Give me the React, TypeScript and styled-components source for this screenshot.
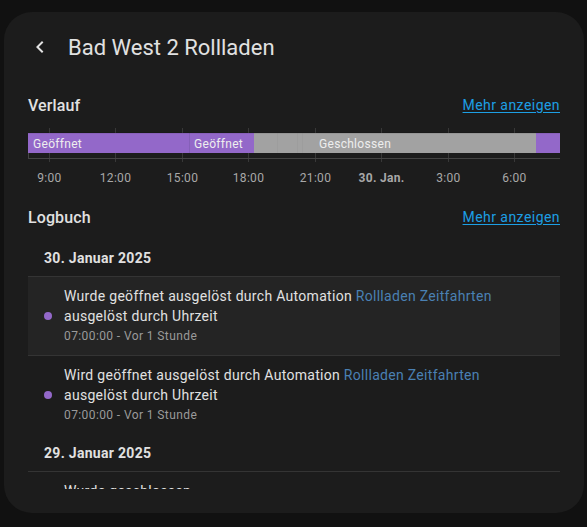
import React from "react";
import styled, { createGlobalStyle } from "styled-components";

const Global = createGlobalStyle`
  html, body { margin: 0; padding: 0; background: #111111; }
  body { font-family: Roboto, "Noto Sans", "Liberation Sans", sans-serif; -webkit-font-smoothing: antialiased; }
`;

const Backdrop = styled.div`
  width: 587px;
  height: 527px;
  box-sizing: border-box;
  padding: 12px 3px 14px 4px;
  background: #111111;
  overflow: hidden;
`;

const Dialog = styled.div`
  width: 580px;
  height: 501px;
  background: #1c1c1c;
  border-radius: 28px;
  display: flex;
  flex-direction: column;
  overflow: hidden;
`;

const Header = styled.div`
  height: 70px;
  display: flex;
  align-items: center;
  padding-left: 12px;
  flex-shrink: 0;
`;

const BackButton = styled.button`
  width: 48px;
  height: 48px;
  border: 0;
  background: transparent;
  display: flex;
  align-items: center;
  justify-content: center;
  padding: 0;
  color: #e1e1e1;
`;

const Title = styled.h2`
  margin: 0 0 0 4px;
  font-size: 22px;
  font-weight: 400;
  color: #e1e1e1;
  letter-spacing: 0;
`;

const Content = styled.div`
  padding: 12px 24px 0;
  display: flex;
  flex-direction: column;
`;

const SectionRow = styled.div<{ $mt?: number }>`
  height: 22px;
  margin-top: ${(p) => p.$mt ?? 0}px;
  display: flex;
  align-items: center;
  justify-content: space-between;
`;

const SectionTitle = styled.h3`
  margin: 0;
  font-size: 16px;
  font-weight: 500;
  color: #e1e1e1;
  letter-spacing: 0.1px;
`;

const MoreLink = styled.a`
  font-size: 14px;
  color: #1d9fe4;
  text-decoration: underline;
  text-underline-offset: 2px;
  letter-spacing: 0.45px;
`;

const ChartWrap = styled.div`
  margin-top: 9px;
  height: 65px;
`;

const LogList = styled.div`
  margin-top: 12px;
  height: 249px;
  overflow: hidden;
`;

const DateHeader = styled.div`
  height: 36px;
  box-sizing: content-box;
  border-bottom: 1px solid #343434;
  padding-left: 16px;
  display: flex;
  align-items: center;
  font-size: 14px;
  font-weight: 700;
  color: #e1e1e1;
  letter-spacing: 0.3px;
`;

const Entry = styled.div<{ $hover?: boolean; $border?: boolean }>`
  display: flex;
  align-items: center;
  padding: 9px 0 9px 16px;
  background: ${(p) => (p.$hover ? "#242424" : "transparent")};
  border-bottom: 1px solid ${(p) => (p.$border ? "#343434" : "transparent")};
`;

const Dot = styled.span`
  width: 8px;
  height: 8px;
  border-radius: 50%;
  background: #9368c9;
  flex-shrink: 0;
  margin-right: 12px;
`;

const EntryBody = styled.div`
  display: flex;
  flex-direction: column;
`;

const Message = styled.div`
  font-size: 14px;
  line-height: 20px;
  color: #e1e1e1;
  letter-spacing: 0.3px;
`;

const EntityLink = styled.span`
  color: #4a80b3;
`;

const Time = styled.div`
  font-size: 12px;
  line-height: 20px;
  color: #9a9a9a;
  letter-spacing: 0.4px;
`;

const ticks = [
  { x: 21, l: "9:00" },
  { x: 87, l: "12:00" },
  { x: 154, l: "15:00" },
  { x: 220, l: "18:00" },
  { x: 287, l: "21:00" },
  { x: 353, l: "30. Jan.", b: true },
  { x: 420, l: "3:00" },
  { x: 486, l: "6:00" },
];

const Chart = () => (
  <svg width="532" height="65" viewBox="0 0 532 65" style={{ display: "block" }}>
    {ticks.map((t) => (
      <line key={t.x} x1={t.x + 0.5} x2={t.x + 0.5} y1={3} y2={37} stroke="#383838" strokeWidth="1" />
    ))}
    <line x1="0.5" x2="0.5" y1="28" y2="34" stroke="#444" />
    <line x1="0" x2="532" y1="33.5" y2="33.5" stroke="#444" />
    <rect x="0" y="8" width="162" height="20" fill="#9368c9" />
    <rect x="162" y="8" width="64" height="20" fill="#9368c9" />
    <line x1="161.5" x2="161.5" y1="8" y2="28" stroke="#8560b8" />
    <rect x="226" y="8" width="282" height="20" fill="#a2a2a2" />
    <line x1="249.5" x2="249.5" y1="8" y2="28" stroke="#9d9d9d" />
    <line x1="269.5" x2="269.5" y1="8" y2="28" stroke="#9d9d9d" />
    <line x1="274.5" x2="274.5" y1="8" y2="28" stroke="#9d9d9d" />
    <rect x="508" y="8" width="24" height="20" fill="#9368c9" />
    <line x1="0" x2="532" y1="8" y2="8" stroke="rgba(0,0,0,0.15)" />
    <g fontFamily="Roboto, sans-serif" fontSize="12" fill="#eeeeee" letterSpacing="0.3">
      <text x="5" y="22.5">Geöffnet</text>
      <text x="166" y="22.5">Geöffnet</text>
      <text x="291" y="22.5">Geschlossen</text>
    </g>
    <g fontFamily="Roboto, sans-serif" fontSize="12" fill="#a8a8a8" textAnchor="middle" letterSpacing="0.3">
      {ticks.map((t) => (
        <text key={t.l} x={t.x + 0.5} y="56.5" fontWeight={t.b ? 700 : 400}>
          {t.l}
        </text>
      ))}
    </g>
  </svg>
);

export default function App() {
  return (
    <>
      <Global />
      <Backdrop>
        <Dialog>
          <Header>
            <BackButton aria-label="Zurück">
              <svg width="24" height="24" viewBox="0 0 24 24">
                <path d="M15.41 16.58 10.83 12l4.58-4.59L14 6l-6 6 6 6z" fill="#e1e1e1" />
              </svg>
            </BackButton>
            <Title>Bad West 2 Rollladen</Title>
          </Header>
          <Content>
            <SectionRow>
              <SectionTitle>Verlauf</SectionTitle>
              <MoreLink>Mehr anzeigen</MoreLink>
            </SectionRow>
            <ChartWrap>
              <Chart />
            </ChartWrap>
            <SectionRow $mt={16}>
              <SectionTitle>Logbuch</SectionTitle>
              <MoreLink>Mehr anzeigen</MoreLink>
            </SectionRow>
            <LogList>
              <DateHeader>30. Januar 2025</DateHeader>
              <Entry $hover $border>
                <Dot />
                <EntryBody>
                  <Message>
                    Wurde geöffnet ausgelöst durch Automation <EntityLink>Rollladen Zeitfahrten</EntityLink>
                    <br />
                    ausgelöst durch Uhrzeit
                  </Message>
                  <Time>07:00:00 - Vor 1 Stunde</Time>
                </EntryBody>
              </Entry>
              <Entry>
                <Dot />
                <EntryBody>
                  <Message>
                    Wird geöffnet ausgelöst durch Automation <EntityLink>Rollladen Zeitfahrten</EntityLink>
                    <br />
                    ausgelöst durch Uhrzeit
                  </Message>
                  <Time>07:00:00 - Vor 1 Stunde</Time>
                </EntryBody>
              </Entry>
              <DateHeader>29. Januar 2025</DateHeader>
              <Entry>
                <Dot />
                <EntryBody>
                  <Message>Wurde geschlossen</Message>
                  <Time>18:00:00 - Vor 14 Stunden</Time>
                </EntryBody>
              </Entry>
            </LogList>
          </Content>
        </Dialog>
      </Backdrop>
    </>
  );
}
